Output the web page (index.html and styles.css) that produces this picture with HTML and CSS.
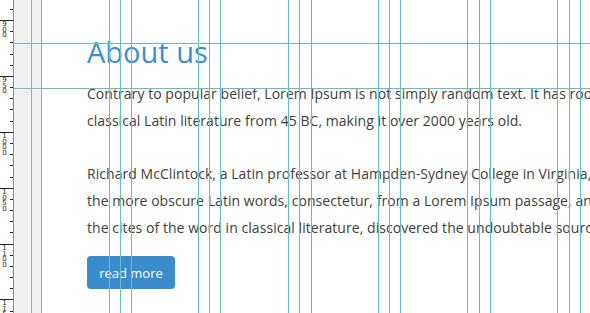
FILE: index.html
```html
<!DOCTYPE html>
<html lang="en">
<head>
    <meta charset="UTF-8">
    <meta name="viewport" content="width=device-width, initial-scale=1.0">
    <title>About us - layout</title>
    <link rel="stylesheet" href="styles.css">
</head>
<body>

<div class="workspace">
    <!-- Vertical ruler -->
    <div class="ruler" id="ruler"></div>

    <!-- Grey pasteboard strip -->
    <div class="pasteboard"></div>

    <!-- Document canvas -->
    <main class="canvas">
        <h1 class="title">About us</h1>
        <p class="text">
            Contrary to popular belief, Lorem Ipsum is not simply random text. It has roots in a piece of<br>
            classical Latin literature from 45 BC, making it over 2000 years old.
        </p>
        <p class="text">
            Richard McClintock, a Latin professor at Hampden-Sydney College in Virginia, looked up one of<br>
            the more obscure Latin words, consectetur, from a Lorem Ipsum passage, and going through<br>
            the cites of the word in classical literature, discovered the undoubtable source.
        </p>
        <a href="#" class="btn">read more</a>
    </main>

    <!-- Guides overlay -->
    <div class="guides" id="guides"></div>
</div>

<script>
    // Ruler ticks: 50 units every ~55.9px, minor tick every 10 units
    const ruler = document.getElementById('ruler');
    const unit = 55.9 / 50;
    const startY = 20;

    for (let v = 850; v <= 1200; v += 10) {
        let y = Math.round(startY + (v - 900) * unit);
        if (y < -10 || y > 320) continue;

        let tick = document.createElement('div');
        if (v % 50 === 0) {
            tick.className = 'tick major';
            let label = document.createElement('div');
            label.className = 'tick-label';
            label.textContent = String(v);
            label.style.top = (y + 2) + 'px';
            ruler.appendChild(label);
        } else {
            tick.className = 'tick';
        }
        tick.style.top = y + 'px';
        ruler.appendChild(tick);
    }

    // Guides
    const guides = document.getElementById('guides');
    const columns = [31, 41, 109, 120, 131, 198, 209, 220, 288, 299, 311, 378, 389, 400, 467, 479, 490, 557, 569, 580];
    const rows = [43, 88];

    columns.forEach(x => {
        let g = document.createElement('div');
        g.className = 'guide guide-v';
        g.style.left = x + 'px';
        guides.appendChild(g);
    });

    rows.forEach(y => {
        let g = document.createElement('div');
        g.className = 'guide guide-h';
        g.style.top = y + 'px';
        guides.appendChild(g);
    });
</script>

</body>
</html>
```

FILE: styles.css
```css
* {
    margin: 0;
    padding: 0;
    box-sizing: border-box;
}

html, body {
    height: 100%;
    overflow: hidden;
}

body {
    font-family: 'Open Sans', 'DejaVu Sans', sans-serif;
    background: #ffffff;
}

.workspace {
    position: relative;
    display: flex;
    height: 100%;
}

/* Ruler */
.ruler {
    position: relative;
    width: 14px;
    flex-shrink: 0;
    background: #ffffff;
    border-right: 1px solid #8c8c8c;
    overflow: hidden;
}

.tick {
    position: absolute;
    right: 0;
    width: 3px;
    height: 1px;
    background: #222;
}

.tick.major {
    width: 13px;
}

.tick-label {
    position: absolute;
    left: 1px;
    width: 7px;
    font-family: 'DejaVu Sans', sans-serif;
    font-size: 7px;
    line-height: 5.5px;
    text-align: center;
    color: #1e1e1e;
    word-break: break-all;
    white-space: normal;
}

.pasteboard {
    width: 28px;
    flex-shrink: 0;
    background: #f0f0f0;
}

/* Canvas */
.canvas {
    flex: 1;
    min-width: 0;
    overflow: hidden;
    padding: 35px 0 0 45px;
    white-space: nowrap;
}

.title {
    font-size: 29px;
    font-weight: 400;
    line-height: 34px;
    color: #3a8ed0;
    margin-bottom: 11px;
}

.text {
    font-size: 14px;
    letter-spacing: 0.05px;
    line-height: 27px;
    color: #404040;
    margin-bottom: 26px;
}

.text:last-of-type {
    margin-bottom: 15px;
}

.btn {
    display: inline-flex;
    align-items: center;
    justify-content: center;
    width: 88px;
    height: 33px;
    padding-top: 1px;
    border-radius: 4px;
    background: #3a8dcd;
    color: #ffffff;
    font-size: 13px;
    text-decoration: none;
}

/* Guides overlay */
.guides {
    position: absolute;
    inset: 0;
    pointer-events: none;
}

.guide {
    position: absolute;
    background: #62c2c2;
}

.guide-v {
    top: 0;
    bottom: 0;
    width: 1px;
}

.guide-h {
    left: 13px;
    right: 0;
    height: 1px;
}
```
